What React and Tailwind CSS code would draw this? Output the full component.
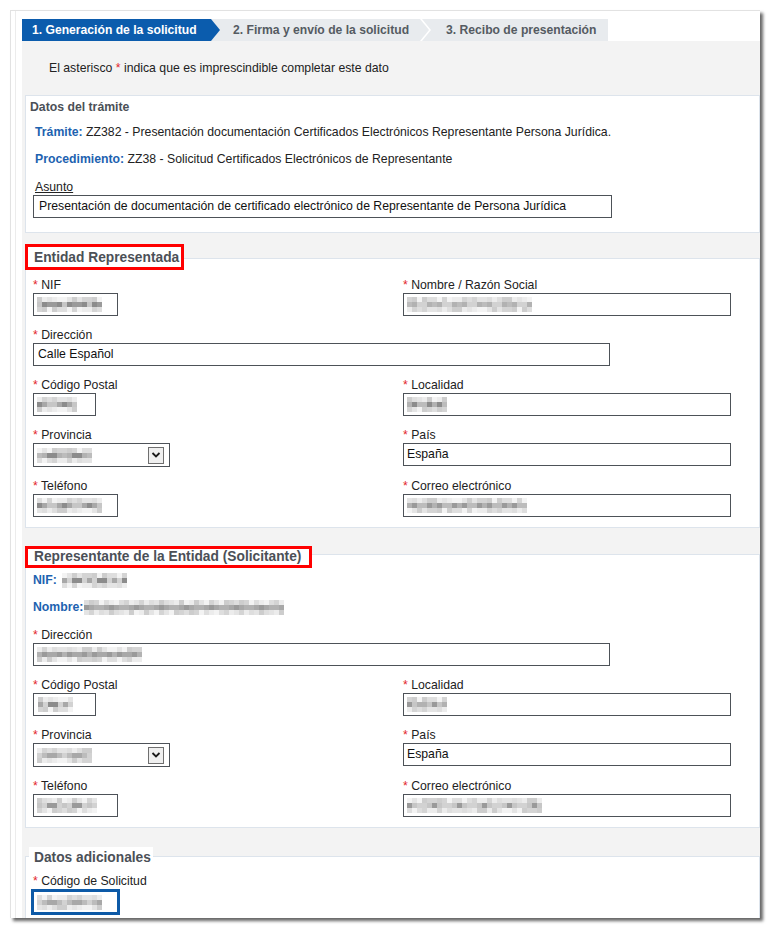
import clsx from 'clsx';

const LIGHT = ['bg-[#ececec]', 'bg-[#dedede]', 'bg-[#d4d4d4]', 'bg-[#f3f3f3]', 'bg-[#cdcdcd]', 'bg-[#e4e4e4]'];
const DARK = ['bg-[#b2b2b2]', 'bg-[#9a9a9a]', 'bg-[#c6c6c6]', 'bg-[#8c8c8c]', 'bg-[#a8a8a8]', 'bg-[#d2d2d2]', 'bg-[#bcbcbc]'];

// pixelated (censored) value
function Pixels({ w, seed = 1 }) {
    const cols = Math.round(w / 5);
    const rows = [LIGHT, DARK, LIGHT];
    return (
        <div className="flex flex-col">
            {rows.map((set, r) => (
                <div key={r} className="flex h-[5px]">
                    {Array.from({ length: cols }).map((_, i) => (
                        <div
                            key={i}
                            className={clsx('h-[5px] w-[5px]', set[(i * 7 + r * 5 + seed * 3 + ((i * i + seed) % 5)) % set.length])}
                        />
                    ))}
                </div>
            ))}
        </div>
    );
}

function Label({ children, req = true }) {
    return (
        <div className="h-[15px] whitespace-nowrap text-[12.25px] leading-[15px] text-[#222]">
            {req && <span className="text-[#e3262b]">*</span>} {children}
        </div>
    );
}

function Input({ className, children }) {
    return (
        <div className={clsx('flex h-[23px] items-center border border-[#4d5258] bg-white pl-[3px] text-[12.25px] text-[#111]', className)}>
            {children}
        </div>
    );
}

function Select({ seed }) {
    return (
        <div className="flex h-[24px] w-[137px] items-center justify-between border border-[#4d5258] bg-white pl-[3px] pr-[5px]">
            <Pixels w={54} seed={seed} />
            <div className="flex h-[17px] w-[16px] items-center justify-center border border-[#6f6f6f] bg-[#efefef]">
                <svg width="10" height="8" viewBox="0 0 10 8">
                    <path d="M1.5 2l3.5 3.5L8.5 2" fill="none" stroke="#1a1a1a" strokeWidth="1.8" />
                </svg>
            </div>
        </div>
    );
}

function Field({ label, children }) {
    return (
        <div className="flex flex-col">
            <Label>{label}</Label>
            {children}
        </div>
    );
}

function Row({ left, right }) {
    return (
        <div className="flex">
            <div className="w-[370px] shrink-0">{left}</div>
            {right && <div>{right}</div>}
        </div>
    );
}

function Legend({ children, className }) {
    return (
        <div className={clsx('relative z-10 bg-white whitespace-nowrap text-[13.75px] font-bold text-[#4b5057]', className)}>
            {children}
        </div>
    );
}

export default function App() {
    return (
        <div className="h-[931px] w-[772px] overflow-hidden bg-white pt-[10px] pl-[10px] font-['Liberation_Sans',Arial,sans-serif]">
            <div className="h-[908px] w-[750px] overflow-hidden border-l border-t border-[#e2e2e2] bg-white shadow-[3px_3px_3px_rgba(0,0,0,0.6)]">
                <div className="ml-[4px] h-full border-l border-[#ececec] pt-[8px] pl-[6px]">
                    {/* Steps */}
                    <div className="flex h-[22px] text-[12.15px] font-bold leading-[23px]">
                        <div className="relative z-10 w-[198px] shrink-0 bg-[#0b5cad] pl-[10px] text-white [clip-path:polygon(0_0,calc(100%_-_9px)_0,100%_50%,calc(100%_-_9px)_100%,0_100%)]">
                            1. Generación de la solicitud
                        </div>
                        <div className="relative z-[5] -ml-[9px] w-[218px] shrink-0 bg-[#e8ebee] pl-[22px] text-[#555b62] [clip-path:polygon(0_0,calc(100%_-_9px)_0,100%_50%,calc(100%_-_9px)_100%,0_100%)]">
                            2. Firma y envío de la solicitud
                        </div>
                        <div className="-ml-[7px] w-[186px] shrink-0 bg-[#e8ebee] pl-[24px] text-[#555b62] [clip-path:polygon(0_0,100%_0,100%_100%,0_100%,9px_50%)]">
                            3. Recibo de presentación
                        </div>
                    </div>

                    <div className="h-full bg-[#f3f3f3] pl-[3px]">
                        <div className="flex h-[54px] items-center pt-[1px] pl-[24px] text-[12.25px] text-[#222]">
                            El asterisco&nbsp;<span className="text-[#e3262b]">*</span>&nbsp;indica que es imprescindible completar este dato
                        </div>

                        {/* Datos del trámite */}
                        <div className="border border-[#dde4ec] bg-white pt-[4px] pb-[14px] text-[12.25px] text-[#222]">
                            <div className="h-[15px] pl-[4px] font-bold leading-[15px] text-[#4b5057]">Datos del trámite</div>
                            <div className="mt-[10px] h-[15px] pl-[9px] leading-[15px]">
                                <span className="font-bold text-[#1d62b0]">Trámite:</span> ZZ382 - Presentación documentación Certificados Electrónicos Representante Persona Jurídica.
                            </div>
                            <div className="mt-[12px] h-[15px] pl-[9px] leading-[15px]">
                                <span className="font-bold text-[#1d62b0]">Procedimiento:</span> ZZ38 - Solicitud Certificados Electrónicos de Representante
                            </div>
                            <div className="mt-[13px] h-[15px] pl-[9px] leading-[15px]">
                                <span className="underline">Asunto</span>
                            </div>
                            <Input className="ml-[7px] w-[579px] pl-[5px]">
                                Presentación de documentación de certificado electrónico de Representante de Persona Jurídica
                            </Input>
                        </div>

                        {/* Entidad Representada */}
                        <div className="mt-[11px]">
                            <Legend className="h-[26px] w-[159px] border-[3px] border-[#ff0000] pl-[6px] leading-[21px]">
                                Entidad Representada
                            </Legend>
                            <div className="-mt-[12px] flex flex-col gap-[12px] border border-[#dde4ec] bg-white pt-[19px] pb-[10px] pl-[7px]">
                                <Row
                                    left={<Field label="NIF"><Input className="w-[85px]"><Pixels w={65} seed={1} /></Input></Field>}
                                    right={<Field label="Nombre / Razón Social"><Input className="w-[328px]"><Pixels w={127} seed={2} /></Input></Field>}
                                />
                                <Row left={<Field label="Dirección"><Input className="w-[577px] pl-[4px]">Calle Español</Input></Field>} />
                                <Row
                                    left={<Field label="Código Postal"><Input className="w-[63px]"><Pixels w={38} seed={3} /></Input></Field>}
                                    right={<Field label="Localidad"><Input className="w-[328px]"><Pixels w={38} seed={4} /></Input></Field>}
                                />
                                <Row
                                    left={<Field label="Provincia"><Select seed={5} /></Field>}
                                    right={<Field label="País"><Input className="w-[328px]">España</Input></Field>}
                                />
                                <Row
                                    left={<Field label="Teléfono"><Input className="w-[85px]"><Pixels w={63} seed={6} /></Input></Field>}
                                    right={<Field label="Correo electrónico"><Input className="w-[328px]"><Pixels w={120} seed={7} /></Input></Field>}
                                />
                            </div>
                        </div>

                        {/* Representante de la Entidad */}
                        <div className="mt-[18px]">
                            <Legend className="h-[22px] w-[287px] border-[3px] border-[#ff0000] pl-[6px] leading-[16px]">
                                Representante de la Entidad (Solicitante)
                            </Legend>
                            <div className="-mt-[14px] flex flex-col border border-[#dde4ec] bg-white pt-[18px] pb-[10px] pl-[7px]">
                                <div className="flex h-[15px] items-center text-[12.25px] font-bold text-[#1d62b0]">
                                    NIF:<span className="ml-[5px]"><Pixels w={64} seed={8} /></span>
                                </div>
                                <div className="mt-[12px] flex h-[15px] items-center text-[12.25px] font-bold text-[#1d62b0]">
                                    Nombre:<span className="ml-[1px]"><Pixels w={200} seed={9} /></span>
                                </div>
                                <div className="mt-[13px] flex flex-col gap-[12px]">
                                    <Row left={<Field label="Dirección"><Input className="w-[577px]"><Pixels w={105} seed={10} /></Input></Field>} />
                                    <Row
                                        left={<Field label="Código Postal"><Input className="w-[63px] pl-[4px]"><Pixels w={35} seed={11} /></Input></Field>}
                                        right={<Field label="Localidad"><Input className="w-[328px]"><Pixels w={38} seed={12} /></Input></Field>}
                                    />
                                    <Row
                                        left={<Field label="Provincia"><Select seed={13} /></Field>}
                                        right={<Field label="País"><Input className="w-[328px]">España</Input></Field>}
                                    />
                                    <Row
                                        left={<Field label="Teléfono"><Input className="w-[85px]"><Pixels w={62} seed={14} /></Input></Field>}
                                        right={<Field label="Correo electrónico"><Input className="w-[328px]"><Pixels w={135} seed={15} /></Input></Field>}
                                    />
                                </div>
                            </div>
                        </div>

                        {/* Datos adicionales */}
                        <div className="mt-[19px]">
                            <Legend className="ml-[4px] h-[20px] w-[124px] pl-[5px] leading-[21px]">Datos adicionales</Legend>
                            <div className="-mt-[11px] border border-[#dde4ec] bg-white pt-[17px] pb-[20px] pl-[7px]">
                                <Label>Código de Solicitud</Label>
                                <div className="-ml-[2px] flex h-[26px] w-[89px] items-center border-[3px] border-[#0d5aa7] bg-white pl-[3px]">
                                    <Pixels w={65} seed={16} />
                                </div>
                            </div>
                        </div>
                    </div>
                </div>
            </div>
        </div>
    );
}
